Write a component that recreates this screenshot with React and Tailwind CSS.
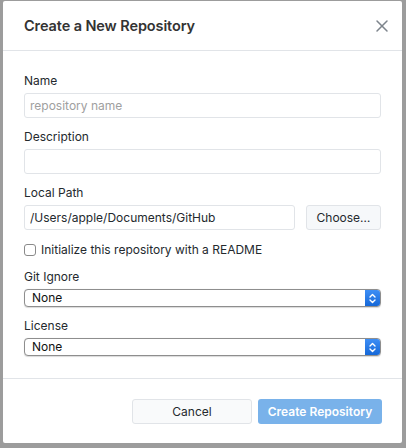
import { X } from 'lucide-react'

function Label({ children }) {
  return <div className="text-[12px] text-[#24292e] leading-4 mb-[4px]">{children}</div>
}

function TextInput({ placeholder, value }) {
  return (
    <input
      readOnly
      placeholder={placeholder}
      value={value}
      className="block w-full h-[25px] px-[5px] text-[12px] text-[#24292e] placeholder:text-[#a0a0a0] border border-[#e1e4e8] rounded-[3px] outline-none bg-white"
    />
  )
}

function MacSelect() {
  return (
    <div className="flex h-[18px] w-full border border-[#8e8e8e] rounded-[4px] bg-white overflow-hidden shadow-[0_0.5px_1px_rgba(0,0,0,0.15)]">
      <div className="flex-1 pl-[7px] text-[12px] leading-[16px] text-[#111]">None</div>
      <div className="w-[15px] bg-gradient-to-b from-[#3d8ef5] to-[#1468d8] flex items-center justify-center">
        <svg width="7" height="11" viewBox="0 0 7 11" fill="none" stroke="white" strokeWidth="1.4" strokeLinecap="round" strokeLinejoin="round">
          <path d="M1 4 L3.5 1.5 L6 4" />
          <path d="M1 7 L3.5 9.5 L6 7" />
        </svg>
      </div>
    </div>
  )
}

export default function App() {
  return (
    <div className="w-[406px] h-[448px] bg-[#9c9c9c] pl-[3px] pr-[4px] pt-[1px] pb-[5px]" style={{ fontFamily: 'Inter, "Noto Sans", sans-serif' }}>
      <div className="h-full bg-white rounded-[2px] flex flex-col">
        <div className="h-[50px] shrink-0 flex items-center justify-between pl-[21px] pr-[10px] border-b border-[#e1e4e8]">
          <h1 className="text-[14.5px] font-semibold text-[#333] tracking-[-0.1px]">Create a New Repository</h1>
          <X size={20} strokeWidth={1.8} className="text-[#7d848c]" />
        </div>

        <div className="flex-1 px-[21px] pt-[22px]">
          <Label>Name</Label>
          <TextInput placeholder="repository name" />

          <div className="mt-[11px]">
            <Label>Description</Label>
            <TextInput />
          </div>

          <div className="mt-[11px]">
            <Label>Local Path</Label>
            <div className="flex gap-[11px]">
              <div className="flex-1">
                <TextInput value="/Users/apple/Documents/GitHub" />
              </div>
              <button className="w-[75px] h-[25px] text-[12px] text-[#24292e] bg-[#f6f8fa] border border-[#e1e4e8] rounded-[3px]">
                Choose…
              </button>
            </div>
          </div>

          <label className="flex items-center gap-[5px] mt-[12px] h-[16px] text-[12px] text-[#24292e]">
            <span className="w-[12px] h-[12px] border border-[#8a8a8a] rounded-[3px] bg-white" />
            Initialize this repository with a README
          </label>

          <div className="mt-[11px]">
            <Label>Git Ignore</Label>
            <MacSelect />
          </div>

          <div className="mt-[11px]">
            <Label>License</Label>
            <MacSelect />
          </div>
        </div>

        <div className="h-[65px] shrink-0 border-t border-[#e1e4e8] flex justify-end items-start gap-[6px] pr-[20px] pt-[20px]">
          <button className="w-[120px] h-[25px] text-[12px] text-[#24292e] bg-[#f9fafb] border border-[#e1e4e8] rounded-[3px]">
            Cancel
          </button>
          <button className="w-[124px] h-[25px] text-[12px] font-semibold text-white bg-[#79b2ea] rounded-[3px]">
            Create Repository
          </button>
        </div>
      </div>
    </div>
  )
}
